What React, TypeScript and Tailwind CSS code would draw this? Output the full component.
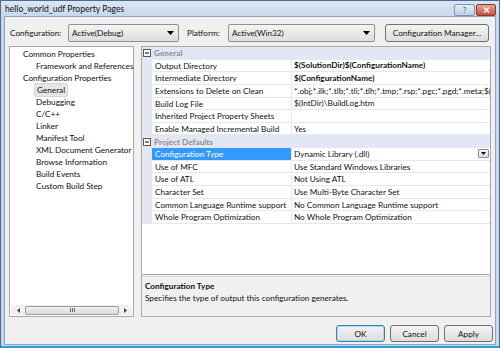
import React from 'react';

const treeItems = [
  { label: 'Common Properties', level: 0 },
  { label: 'Framework and References', level: 1 },
  { label: 'Configuration Properties', level: 0 },
  { label: 'General', level: 1, selected: true },
  { label: 'Debugging', level: 1 },
  { label: 'C/C++', level: 1 },
  { label: 'Linker', level: 1 },
  { label: 'Manifest Tool', level: 1 },
  { label: 'XML Document Generator', level: 1 },
  { label: 'Browse Information', level: 1 },
  { label: 'Build Events', level: 1 },
  { label: 'Custom Build Step', level: 1 },
];

type Prop = { name: string; value: string; bold?: boolean; selected?: boolean };

const general: Prop[] = [
  { name: 'Output Directory', value: '$(SolutionDir)$(ConfigurationName)', bold: true },
  { name: 'Intermediate Directory', value: '$(ConfigurationName)', bold: true },
  { name: 'Extensions to Delete on Clean', value: '*.obj;*.ilk;*.tlb;*.tli;*.tlh;*.tmp;*.rsp;*.pgc;*.pgd;*.meta;$(' },
  { name: 'Build Log File', value: '$(IntDir)\\BuildLog.htm' },
  { name: 'Inherited Project Property Sheets', value: '' },
  { name: 'Enable Managed Incremental Build', value: 'Yes' },
];

const defaults: Prop[] = [
  { name: 'Configuration Type', value: 'Dynamic Library (.dll)', selected: true },
  { name: 'Use of MFC', value: 'Use Standard Windows Libraries' },
  { name: 'Use of ATL', value: 'Not Using ATL' },
  { name: 'Character Set', value: 'Use Multi-Byte Character Set' },
  { name: 'Common Language Runtime support', value: 'No Common Language Runtime support' },
  { name: 'Whole Program Optimization', value: 'No Whole Program Optimization' },
];

const DownArrow = () => (
  <svg width="7" height="4" viewBox="0 0 7 4">
    <path d="M0 0h7L3.5 4z" fill="#000" />
  </svg>
);

const Collapse = () => (
  <svg width="8" height="8" viewBox="0 0 8 8">
    <rect x="0.5" y="0.5" width="7" height="7" fill="#fff" stroke="#555" />
    <path d="M2 4h4" stroke="#000" />
  </svg>
);

const Combo = ({ text, width }: { text: string; width: string }) => (
  <div className={`${width} h-[18px] flex items-center justify-between pl-[3px] pr-[4px] rounded-[2px] border border-[#8e8f8f] bg-gradient-to-b from-[#f4f4f4] to-[#dedede]`}>
    <span>{text}</span>
    <DownArrow />
  </div>
);

const Category = ({ title }: { title: string }) => (
  <div className="flex items-center h-[12.65px] bg-[#e3e7f5]">
    <div className="w-[10px] flex justify-center">
      <Collapse />
    </div>
    <span className="pl-[2px] font-bold text-[#8d8d8d]">{title}</span>
  </div>
);

const Row = ({ p }: { p: Prop }) => (
  <div className="flex h-[12.65px]">
    <div className="w-[10px] shrink-0 bg-[#e3e7f5]" />
    <div
      className={`w-[140px] shrink-0 pl-[3px] whitespace-nowrap overflow-hidden border-r border-b border-[#e6e8ef] leading-[12px] ${
        p.selected ? 'bg-[#3399ff] text-white' : 'bg-white'
      }`}
    >
      {p.name}
    </div>
    <div className="flex-1 min-w-0 flex items-center justify-between pl-[2px] pr-[1px] whitespace-nowrap overflow-hidden border-b border-[#e6e8ef] bg-white">
      <span className={`leading-[12px] ${p.bold ? 'font-bold' : ''}`}>{p.value}</span>
      {p.selected && (
        <div className="w-[11px] h-[9px] flex items-center justify-center border border-[#8e8f8f] rounded-[1px] bg-gradient-to-b from-[#f6f6f6] to-[#dcdcdc]">
          <svg width="5" height="3" viewBox="0 0 5 3">
            <path d="M0 0h5L2.5 3z" fill="#000" />
          </svg>
        </div>
      )}
    </div>
  </div>
);

const Button = ({ label, width, primary }: { label: string; width: string; primary?: boolean }) => (
  <div
    className={`${width} h-[17px] flex items-center justify-center rounded-[3px] border bg-gradient-to-b from-[#f3f3f3] to-[#dddddd] ${
      primary ? 'border-[#3c7fb1] shadow-[inset_0_0_0_1px_#a6dcf5]' : 'border-[#707070]'
    }`}
  >
    {label}
  </div>
);

export default function App() {
  return (
    <div className="w-[500px] h-[348px] overflow-hidden flex flex-col bg-[#c5d6ea] border-x border-t border-[#4e6a8c] text-[8.2px] leading-[12px] text-[#111] font-[family-name:Lato,sans-serif]">
      <div className="h-[15px] shrink-0 flex items-center justify-between pl-[4px] pr-[3px] bg-gradient-to-b from-[#dbe6f3] to-[#c8d8ec]">
        <span className="text-[8.6px] mt-[1px]">hello_world_udf Property Pages</span>
        <div className="flex gap-[1px] mt-[2px]">
          <div className="w-[21px] h-[12px] flex items-center justify-center rounded-[2px] border border-[#7f93ad] bg-gradient-to-b from-[#e6eef8] to-[#bfd0e6] text-[8px] text-[#4b5d75]">
            ?
          </div>
          <div className="w-[20px] h-[12px] flex items-center justify-center rounded-[2px] border border-[#8a3a30] bg-gradient-to-b from-[#e8a292] to-[#c9503d]">
            <svg width="7" height="6" viewBox="0 0 7 6">
              <path d="M1 0.5l5 5M6 0.5l-5 5" stroke="#fff" strokeWidth="1.5" />
            </svg>
          </div>
        </div>
      </div>

      <div className="mx-[3px] h-[329px] shrink-0 bg-[#f0f0f0] border border-[#8fa5bf] flex flex-col pt-[7px] pl-[4px] pr-[3px]">
        <div className="h-[18px] flex items-center">
          <span className="w-[59px] pl-[1px]">Configuration:</span>
          <Combo text="Active(Debug)" width="w-[111px]" />
          <span className="ml-[8px] w-[41px]">Platform:</span>
          <Combo text="Active(Win32)" width="w-[147px]" />
          <div className="ml-[10px] w-[104px] h-[18px] flex items-center justify-center rounded-[3px] border border-[#707070] bg-gradient-to-b from-[#f3f3f3] to-[#dddddd]">
            Configuration Manager...
          </div>
        </div>

        <div className="mt-[4px] flex h-[271px]">
          <div className="w-[125px] shrink-0 flex flex-col bg-white border border-[#a9a9a9]">
            <div className="flex-1 pt-[1px] flex flex-col">
              {treeItems.map((t) => (
                <div key={t.label} className={`h-[12px] flex items-center whitespace-nowrap ${t.level ? 'pl-[26px]' : 'pl-[13px]'}`}>
                  <span className={t.selected ? 'px-[2px] -mx-[2px] rounded-[2px] bg-[#e6e6e6] border border-[#d6d6d6]' : ''}>
                    {t.label}
                  </span>
                </div>
              ))}
            </div>
            <div className="h-[10px] mx-[1px] mb-[1px] flex items-center bg-[#f0f0f0]">
              <div className="w-[14px] flex justify-center">
                <svg width="3" height="5" viewBox="0 0 3 5">
                  <path d="M3 0v5L0 2.5z" fill="#444" />
                </svg>
              </div>
              <div className="w-[94px] h-[9px] flex items-center justify-center rounded-[2px] border border-[#9a9a9a] bg-gradient-to-b from-[#f2f2f2] to-[#d8d8d8]">
                <svg width="5" height="4" viewBox="0 0 5 4">
                  <path d="M0.5 0v4M2.5 0v4M4.5 0v4" stroke="#666" />
                </svg>
              </div>
              <div className="flex-1 flex justify-center">
                <svg width="3" height="5" viewBox="0 0 3 5">
                  <path d="M0 0v5L3 2.5z" fill="#444" />
                </svg>
              </div>
            </div>
          </div>

          <div className="ml-[7px] w-[350px] flex flex-col border border-[#a9a9a9] bg-[#f0f0f0]">
            <div className="h-[227px] bg-white flex flex-col overflow-hidden">
              <Category title="General" />
              {general.map((p) => (
                <Row key={p.name} p={p} />
              ))}
              <Category title="Project Defaults" />
              {defaults.map((p) => (
                <Row key={p.name} p={p} />
              ))}
            </div>
            <div className="h-[3px] border-t border-[#a9a9a9] border-b border-b-[#d9d9d9]" />
            <div className="flex-1 pl-[3px] pt-[3px] flex flex-col">
              <span className="font-bold">Configuration Type</span>
              <span>Specifies the type of output this configuration generates.</span>
            </div>
          </div>
        </div>

        <div className="mt-[8px] flex justify-end -mr-[1px]">
          <Button label="OK" width="w-[49px]" primary />
          <div className="w-[5px]" />
          <Button label="Cancel" width="w-[49px]" />
          <div className="w-[5px]" />
          <Button label="Apply" width="w-[49px]" />
        </div>
      </div>

      <div className="flex-1 border-b-2 border-[#2f9fda]" />
    </div>
  );
}
